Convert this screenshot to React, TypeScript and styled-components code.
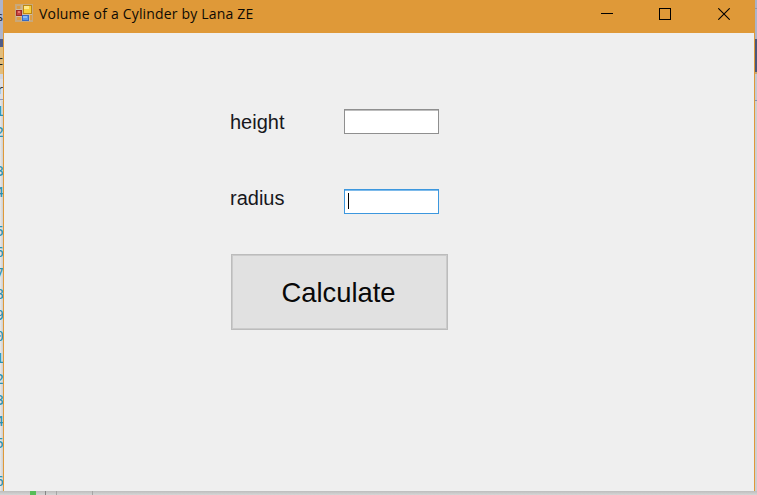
import React from "react";
import styled, { createGlobalStyle } from "styled-components";

const GlobalStyle = createGlobalStyle`
  * { box-sizing: border-box; }
  body { margin: 0; overflow: hidden; }
`;

const Desktop = styled.main`
  width: 757px;
  height: 495px;
  display: grid;
  grid-template-columns: 3px 752px 2px;
  grid-template-rows: 491px 4px;
  overflow: hidden;
  background: #dcdcdc;
`;

const Gutter = styled.aside`
  display: flex;
  flex-direction: column;
  overflow: hidden;
  background: linear-gradient(90deg, #e9e9e9, #cfcfcf);
`;

const Band = styled.div<{ $h: number; $bg: string }>`
  flex: none;
  height: ${(p) => p.$h}px;
  background: ${(p) => p.$bg};
`;

const EditorLine = styled.div<{ $h: number }>`
  flex: none;
  height: ${(p) => p.$h}px;
  display: flex;
  justify-content: flex-end;
  overflow: hidden;
  margin-right: -1px;
  color: #2b91af;
  font: 14px/20px "DejaVu Sans Mono", monospace;
`;

const TabText = styled.div<{ $h: number; $bg: string }>`
  flex: none;
  height: ${(p) => p.$h}px;
  display: flex;
  justify-content: flex-end;
  overflow: hidden;
  background: ${(p) => p.$bg};
  color: #1e1e1e;
  font: 13px/${(p) => p.$h}px "Open Sans", sans-serif;
`;

const Window = styled.section`
  display: flex;
  flex-direction: column;
  border: solid #df9938;
  border-width: 0 1px;
  background: #efefef;
`;

const TitleBar = styled.header`
  height: 33px;
  flex: none;
  display: flex;
  align-items: flex-start;
  padding-left: 11px;
  background: #df9938;
`;

const AppIcon = styled.svg`
  flex: none;
  margin-top: 4px;
`;

const Title = styled.h1`
  flex: 1;
  margin: 0 0 0 6px;
  color: #0d0a04;
  font: 400 14px/27px "Open Sans", sans-serif;
  letter-spacing: 0.18px;
  white-space: nowrap;
`;

const Controls = styled.div`
  display: flex;
  margin-right: 1px;
`;

const ControlButton = styled.button`
  width: 58.5px;
  height: 28px;
  display: flex;
  align-items: center;
  justify-content: center;
  padding: 0;
  border: 0;
  background: none;
`;

const Form = styled.form`
  display: flex;
  flex-direction: column;
  align-items: flex-start;
  padding: 76px 0 0 226px;
`;

const Field = styled.div<{ $gap: number }>`
  display: flex;
  align-items: flex-start;
  height: 26px;
  margin-bottom: ${(p) => p.$gap}px;
`;

const Label = styled.label<{ $lift?: number }>`
  width: 114px;
  margin-top: ${(p) => 1 - (p.$lift ?? 0)}px;
  color: #17171c;
  font: 20px/24px "Liberation Sans", Arial, sans-serif;
`;

const TextBox = styled.div<{ $active?: boolean }>`
  width: 95px;
  height: 25px;
  display: flex;
  align-items: flex-start;
  padding: 3px 0 0 3px;
  border: 1px solid ${(p) => (p.$active ? "#3c97de" : "#8f8f8f")};
  box-shadow: inset 0 1px ${(p) => (p.$active ? "#7dbaea" : "#bdbdbd")};
  background: #fff;
`;

const Caret = styled.span`
  width: 1px;
  height: 16px;
  background: #000;
`;

const CalculateButton = styled.button`
  width: 217px;
  height: 76px;
  margin-left: 1px;
  padding: 1px 2px 0 0;
  border: 1px solid #bcbcbc;
  border-radius: 0;
  box-shadow: inset 0 0 0 1px #cbcbcb;
  background: #e1e1e1;
  color: #080808;
  font: 27.4px "Liberation Sans", Arial, sans-serif;
`;

const RightEdge = styled.aside`
  display: flex;
  flex-direction: column;
  background: #cecece;
`;

const Footer = styled.footer`
  grid-column: 1 / -1;
  display: flex;
  background: linear-gradient(#bdbdbd, #d6d6d6);
`;

const Mark = styled.i<{ $w: number; $gap: number; $bg: string }>`
  flex: none;
  width: ${(p) => p.$w}px;
  height: 4px;
  margin-left: ${(p) => p.$gap}px;
  background: ${(p) => p.$bg};
`;

const lines: { text: string; h: number }[] = [
  { text: "1", h: 21 }, { text: "2", h: 39 }, { text: "3", h: 21 },
  { text: "4", h: 39 }, { text: "5", h: 21 }, { text: "6", h: 21 },
  { text: "7", h: 21 }, { text: "8", h: 21 }, { text: "9", h: 21 },
  { text: "0", h: 22 }, { text: "1", h: 21 }, { text: "2", h: 21 },
  { text: "3", h: 21 }, { text: "4", h: 22 }, { text: "5", h: 38 },
  { text: "6", h: 21 },
];

function FormsIcon() {
  return (
    <AppIcon width="18" height="18" viewBox="0 0 18 18">
      <path d="M0 0h18v18H0z" fill="#c8a87b" />
      <path d="M2 2h3v3H2zM2 13h4v3H2zM15 11h2v5h-2z" fill="#dd9c43" />
      <path d="M7 1v16M1 5.5h6M1 12.5h6M7 10.5h10M14.5 10v7" stroke="#d2bea0" />
      <path d="M8 1h9v9H8z" fill="#bf8810" />
      <path d="M9 2h7v7H9z" fill="#f7ce3d" />
      <path d="M9 2h5v3H9z" fill="#ffe88a" />
      <path d="M1 6h6v6H1z" fill="#9c2829" />
      <path d="M2 7h4v4H2z" fill="#c84540" />
      <path d="M3 7h2v2H3z" fill="#e77b70" />
      <path d="M7 11h7v6H7z" fill="#386bc2" />
      <path d="M8 12h5v4H8z" fill="#5b98e9" />
      <path d="M8 12h4v2H8z" fill="#8dbaf4" />
    </AppIcon>
  );
}

export default function App() {
  return (
    <>
      <GlobalStyle />
      <Desktop>
        <Gutter>
          <Band $h={6} $bg="#adb4cb" />
          <TabText $h={20} $bg="#adb4cb">s</TabText>
          <Band $h={13} $bg="#adb4cb" />
          <Band $h={8} $bg="#4f5d89" />
          <TabText $h={27} $bg="#e2bd7b">c</TabText>
          <Band $h={5} $bg="#d1d5df" />
          <TabText $h={20} $bg="#dcdee5">r</TabText>
          <Band $h={1} $bg="#8f9bbb" />
          <Band $h={1} $bg="#dedede" />
          {lines.map((line, i) => (
            <EditorLine key={i} $h={line.h}>{line.text}</EditorLine>
          ))}
        </Gutter>
        <Window>
          <TitleBar>
            <FormsIcon />
            <Title>Volume of a Cylinder by Lana ZE</Title>
            <Controls>
              <ControlButton type="button" aria-label="Minimize">
                <svg width="12" height="12" shapeRendering="crispEdges">
                  <path d="M0 5.5h12" stroke="#000" />
                </svg>
              </ControlButton>
              <ControlButton type="button" aria-label="Maximize">
                <svg width="12" height="12" shapeRendering="crispEdges">
                  <path d="M.5.5h11v11H.5z" fill="none" stroke="#000" />
                </svg>
              </ControlButton>
              <ControlButton type="button" aria-label="Close">
                <svg width="12" height="12">
                  <path d="M.3.3l11.4 11.4M11.7.3L.3 11.7" stroke="#000" strokeWidth="1.1" />
                </svg>
              </ControlButton>
            </Controls>
          </TitleBar>
          <Form>
            <Field $gap={54}>
              <Label>height</Label>
              <TextBox />
            </Field>
            <Field $gap={39}>
              <Label $lift={4}>radius</Label>
              <TextBox $active><Caret /></TextBox>
            </Field>
            <CalculateButton type="button">Calculate</CalculateButton>
          </Form>
        </Window>
        <RightEdge>
          <Band $h={8} $bg="#aab1c8" />
          <Band $h={1} $bg="#8f96ab" />
          <Band $h={30} $bg="#adb4cb" />
          <Band $h={33} $bg="#4b5678" />
          <Band $h={2} $bg="#c7a673" />
          <Band $h={26} $bg="#c5c8d0" />
          <Band $h={1} $bg="#8590b0" />
        </RightEdge>
        <Footer>
          <Mark $w={6} $gap={30} $bg="#56bd58" />
          <Mark $w={1} $gap={9} $bg="#858585" />
          <Mark $w={1} $gap={10} $bg="#a5a5a5" />
          <Mark $w={1} $gap={35} $bg="#a5a5a5" />
        </Footer>
      </Desktop>
    </>
  );
}
